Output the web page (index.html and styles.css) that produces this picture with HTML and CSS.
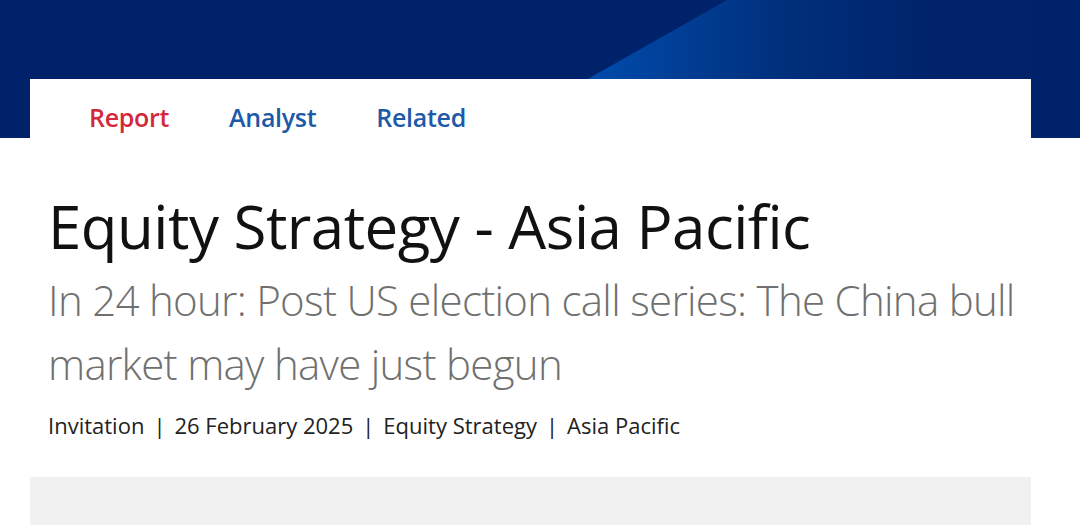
FILE: index.html
```html
<!DOCTYPE html>
<html lang="en">
<head>
<meta charset="utf-8">
<title>Equity Strategy - Asia Pacific</title>
<link rel="stylesheet" href="styles.css">
</head>
<body>
  <header class="hero"></header>
  <main class="sheet">
    <nav class="tabs">
      <a class="tab tab-active" href="#report">Report</a>
      <a class="tab" href="#analyst">Analyst</a>
      <a class="tab" href="#related">Related</a>
    </nav>
    <section class="headline">
      <h1 class="title">Equity Strategy - Asia Pacific</h1>
      <p class="subtitle">In 24 hour: Post US election call series: The China bull market may have just begun</p>
      <p class="meta">
        <span>Invitation</span><span class="sep">|</span><span>26 February 2025</span><span class="sep">|</span><span>Equity Strategy</span><span class="sep">|</span><span>Asia Pacific</span>
      </p>
    </section>
    <div class="panel"></div>
  </main>
</body>
</html>
```

FILE: styles.css
```css
html, body {
  margin: 0;
  padding: 0;
  background: #ffffff;
}

body {
  font-family: "Open Sans", "Noto Sans", sans-serif;
  color: #1a1a1a;
  overflow: hidden;
}

/* navy banner with the bright diagonal sweep */
.hero {
  position: relative;
  height: 138px;
  background: #00226a;
  overflow: hidden;
}

.hero::after {
  content: "";
  position: absolute;
  inset: 0;
  background: linear-gradient(90deg, #0057bd 0%, #0048a6 22%, #00307c 50%, #00236b 75%, #00226a 100%);
  background-position: 480px 0;
  background-size: 600px 100%;
  background-repeat: no-repeat;
  clip-path: polygon(727px 0, 100% 0, 100% 100%, 484px 100%);
}

.sheet {
  position: relative;
  width: 1001px;
  margin: -59px 0 0 30px;
  background: #ffffff;
}

.tabs {
  display: flex;
  gap: 60px;
  padding: 22px 0 0 59px;
  height: 59px;
  box-sizing: border-box;
}

.tab {
  font-size: 25px;
  font-weight: 600;
  color: #1c5aa8;
  text-decoration: none;
  letter-spacing: -0.3px;
  line-height: 32px;
}

.tab-active {
  color: #d4283a;
}

.headline {
  padding: 0 0 0 18px;
}

.title {
  margin: 52px 0 0;
  font-size: 60px;
  font-weight: 400;
  line-height: 72px;
  color: #111111;
  letter-spacing: -0.5px;
}

.subtitle {
  margin: 6px 0 0;
  font-size: 42px;
  font-weight: 300;
  line-height: 64px;
  color: #707070;
  letter-spacing: -0.7px;
}

.meta {
  margin: 14px 0 0;
  font-size: 22px;
  color: #222222;
  line-height: 30px;
}

.sep {
  margin: 0 9px;
}

.panel {
  margin-top: 37px;
  height: 60px;
  background: #f1f1f1;
}
```
